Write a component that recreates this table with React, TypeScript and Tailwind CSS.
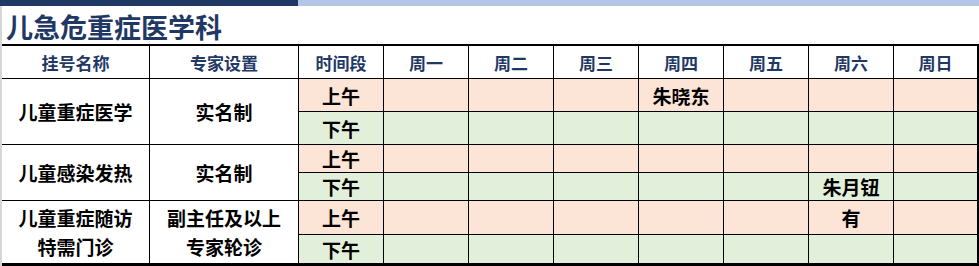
import { Fragment } from "react"

const days = ["周一", "周二", "周三", "周四", "周五", "周六", "周日"]

type Slot = { label: string; cells: Record<number, string> }
type Dept = { name: string[]; expert: string[]; slots: Slot[] }

const depts: Dept[] = [
  {
    name: ["儿童重症医学"],
    expert: ["实名制"],
    slots: [
      { label: "上午", cells: { 3: "朱晓东" } },
      { label: "下午", cells: {} },
    ],
  },
  {
    name: ["儿童感染发热"],
    expert: ["实名制"],
    slots: [
      { label: "上午", cells: {} },
      { label: "下午", cells: { 5: "朱月钮" } },
    ],
  },
  {
    name: ["儿童重症随访", "特需门诊"],
    expert: ["副主任及以上", "专家轮诊"],
    slots: [
      { label: "上午", cells: { 5: "有" } },
      { label: "下午", cells: {} },
    ],
  },
]

const cell = "border-r border-b border-black flex items-center justify-center"
const head = `${cell} text-[17px] text-[#1f3864]`

export default function App() {
  return (
    <div
      className="w-[979px] h-[266px] bg-white flex flex-col overflow-hidden"
      style={{ fontFamily: '"Noto Sans CJK SC", "Noto Sans", sans-serif' }}
    >
      {/* bandeau haut */}
      <div className="flex h-[6px] flex-shrink-0">
        <div className="w-[298px] bg-[#203864]" />
        <div className="flex-1 bg-[#b4c6e7]" />
      </div>

      <div className="flex flex-1 min-h-0">
        <div className="w-[2px] bg-[#d6d6d6] flex-shrink-0" />
        <div className="flex-1 flex flex-col">
          {/* titre */}
          <div className="h-[38px] flex items-center pl-[4px] pt-[2px] text-[27px] leading-none font-bold text-[#1f3864]">
            儿急危重症医学科
          </div>

          {/* tableau */}
          <div className="grid grid-cols-[148px_149px_repeat(7,85px)_84px] grid-rows-[33px_33px_33px_28px_28px_34px_29px] border-t-2 border-r border-b-2 border-black text-[19px] font-bold text-black leading-none">
            <div className={head}>挂号名称</div>
            <div className={head}>专家设置</div>
            <div className={head}>时间段</div>
            {days.map(d => (
              <div key={d} className={head}>{d}</div>
            ))}

            {depts.map(dep => (
              <Fragment key={dep.name.join("")}>
                <div className={`${cell} row-span-2 flex-col leading-[29px]`}>
                  {dep.name.map(n => <span key={n}>{n}</span>)}
                </div>
                <div className={`${cell} row-span-2 flex-col leading-[29px]`}>
                  {dep.expert.map(n => <span key={n}>{n}</span>)}
                </div>
                {dep.slots.map((s, si) => {
                  const bg = si === 0 ? "bg-[#fce4d6]" : "bg-[#e2efda]"
                  return (
                    <Fragment key={s.label}>
                      <div className={`${cell} ${bg}`}>{s.label}</div>
                      {days.map((d, di) => (
                        <div key={d} className={`${cell} ${bg}`}>
                          {s.cells[di] ?? ""}
                        </div>
                      ))}
                    </Fragment>
                  )
                })}
              </Fragment>
            ))}
          </div>
        </div>
      </div>
    </div>
  )
}
